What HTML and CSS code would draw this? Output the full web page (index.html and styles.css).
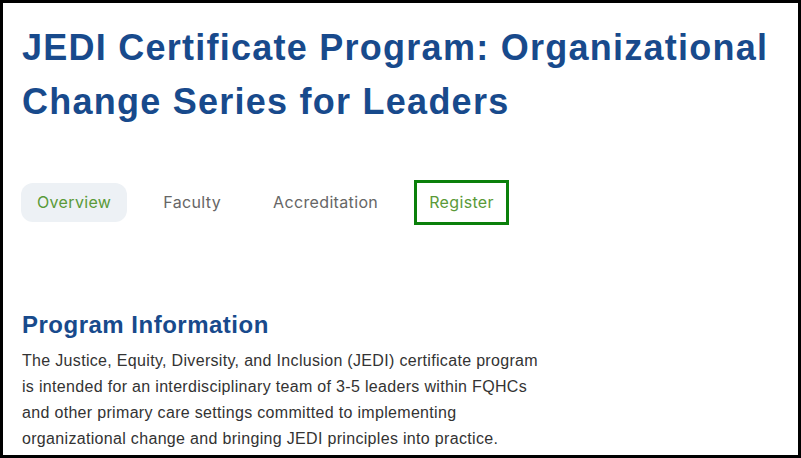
FILE: index.html
```html
<!DOCTYPE html>
<html lang="en">
<head>
    <meta charset="utf-8" />
    <title>JEDI Certificate Program</title>
    <link rel="stylesheet" href="styles.css">
</head>
<body>
    <div class="frame">
        <h1 class="title">JEDI Certificate Program: Organizational Change Series for Leaders</h1>

        <ul class="tabs">
            <li class="current">Overview</li>
            <li>Faculty</li>
            <li>Accreditation</li>
            <li class="focus">Register</li>
        </ul>

        <h2 class="section">Program Information</h2>
        <p class="intro">The Justice, Equity, Diversity, and Inclusion (JEDI) certificate program is intended for an interdisciplinary team of 3-5 leaders within FQHCs and other primary care settings committed to implementing organizational change and bringing JEDI principles into practice.</p>
    </div>
</body>
</html>
```

FILE: styles.css
```css
body,
h1,
h2,
p,
ul,
li
{
    margin: 0;
    padding: 0;
}

ul
{
    list-style-type: none;
}

body
{
    background: #fff;
    font: 16px/26px "Liberation Sans", Arial, sans-serif;
    letter-spacing: 0.32px;
    color: #333;
}

.frame
{
    box-sizing: border-box;
    width: 801px;
    height: 458px;
    border: 3px solid #000;
    padding: 18px 19px 0;
    overflow: hidden;
}

.title
{
    font-size: 36px;
    line-height: 54px;
    font-weight: 700;
    letter-spacing: 1.25px;
    color: #184a8c;
}

.tabs
{
    display: flex;
    align-items: center;
    gap: 20px;
    margin: 51px 0 0 -1px;
    font-family: Inter, Roboto, sans-serif;
    font-size: 16px;
    line-height: 23px;
    letter-spacing: 0.35px;
    color: #666;
}

    .tabs li
    {
        padding: 8px 16px;
        border-radius: 12px;
    }

        .tabs li.current
        {
            background: #edf1f5;
            color: #5a9a38;
        }

        .tabs li.focus
        {
            padding: 8px 12px;
            border: 3px solid #0a800a;
            border-radius: 0;
            color: #5a9a38;
        }

.section
{
    margin-top: 85px;
    font-size: 24px;
    line-height: 29px;
    font-weight: 700;
    letter-spacing: 0.5px;
    color: #184a8c;
}

.intro
{
    width: 525px;
    margin-top: 9px;
}
```
